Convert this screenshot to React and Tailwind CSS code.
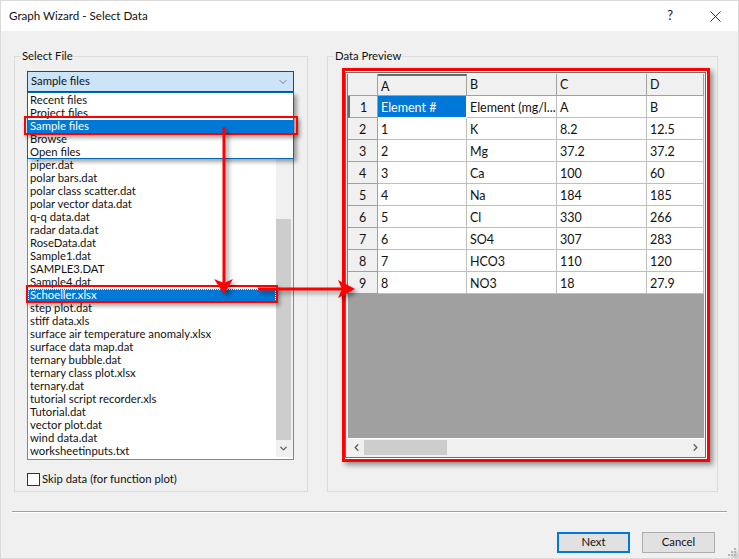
import React from 'react';
import { ChevronDown, ChevronLeft, ChevronRight, X } from 'lucide-react';

const files = [
  'piper.dat', 'polar bars.dat', 'polar class scatter.dat', 'polar vector data.dat', 'q-q data.dat',
  'radar data.dat', 'RoseData.dat', 'Sample1.dat', 'SAMPLE3.DAT', 'Sample4.dat', 'Schoeller.xlsx',
  'step plot.dat', 'stiff data.xls', 'surface air temperature anomaly.xlsx', 'surface data map.dat',
  'ternary bubble.dat', 'ternary class plot.xlsx', 'ternary.dat', 'tutorial script recorder.xls',
  'Tutorial.dat', 'vector plot.dat', 'wind data.dat', 'worksheetinputs.txt',
];

const sources = ['Recent files', 'Project files', 'Sample files', 'Browse', 'Open files'];

const rows = [
  ['Element #', 'Element (mg/l...', 'A', 'B'],
  ['1', 'K', '8.2', '12.5'],
  ['2', 'Mg', '37.2', '37.2'],
  ['3', 'Ca', '100', '60'],
  ['4', 'Na', '184', '185'],
  ['5', 'Cl', '330', '266'],
  ['6', 'SO4', '307', '283'],
  ['7', 'HCO3', '110', '120'],
  ['8', 'NO3', '18', '27.9'],
];

const FileList = () => (
  <div className="h-[368px] border border-[#828790] bg-white flex">
    <div className="flex-1 flex flex-col justify-end pb-[1px]">
      {files.map((name) => (
        <div
          key={name}
          className={
            name === 'Schoeller.xlsx'
              ? 'h-[13px] leading-[12px] pl-[2px] bg-[#0078d7] text-white outline-1 outline-dotted outline-white -outline-offset-1'
              : 'h-[13px] leading-[12px] pl-[2px]'
          }
        >
          {name}
        </div>
      ))}
    </div>
    <div className="w-[17px] bg-[#f0f0f0] flex flex-col items-center justify-end mb-[2px]">
      <div className="w-[15px] h-[221px] bg-[#cdcdcd] mr-[2px]" />
      <div className="h-[17px] flex items-center justify-center mr-[2px]">
        <ChevronDown size={11} strokeWidth={3} className="text-[#606060]" />
      </div>
    </div>
  </div>
);

const DataGrid = () => (
  <div className="flex-1 border border-[#6e6e6e] p-px bg-[#f0f0f0] flex flex-col text-[12.5px]">
    <div className="grid grid-cols-[30px_89px_90px_90px_57px] w-[357px] border-l border-[#808080]">
      <div className="h-[22px] bg-[#f0f0f0] border-r border-b border-[#a0a0a0]" />
      {['A', 'B', 'C', 'D'].map((col) => (
        <div
          key={col}
          className={
            col === 'A'
              ? 'h-[22px] pl-[3px] leading-[21px] border-t-2 border-t-[#696969] border-r border-b border-[#a0a0a0]'
              : 'h-[22px] pl-[3px] leading-[21px] border-r border-b border-[#a0a0a0]'
          }
        >
          {col}
        </div>
      ))}
      {rows.map((row, i) => (
        <React.Fragment key={i}>
          <div
            className={
              i === 0
                ? 'h-[22px] text-center leading-[23px] border-l-2 border-l-[#696969] border-r border-b border-[#a0a0a0]'
                : 'h-[22px] text-center leading-[23px] border-r border-b border-[#a0a0a0]'
            }
          >
            {i + 1}
          </div>
          {row.map((cell, j) => (
            <div
              key={j}
              className={
                i === 0 && j === 0
                  ? 'h-[22px] bg-[#0078d7] text-white pl-[3px] leading-[23px] border-r border-b border-white'
                  : 'h-[22px] bg-white pl-[3px] leading-[23px] border-r border-b border-[#bfbfbf] whitespace-nowrap overflow-hidden'
              }
            >
              {cell}
            </div>
          ))}
        </React.Fragment>
      ))}
    </div>
    <div className="flex-1 bg-[#a0a0a0] w-[356px] ml-px" />
    <div className="h-[18px] border-t border-white flex items-center ml-px">
      <div className="w-[16px] flex justify-center">
        <ChevronLeft size={11} strokeWidth={3} className="text-[#606060]" />
      </div>
      <div className="w-[83px] h-[15px] bg-[#cdcdcd]" />
      <div className="flex-1" />
      <div className="w-[17px] flex justify-center">
        <ChevronRight size={11} strokeWidth={3} className="text-[#606060]" />
      </div>
    </div>
  </div>
);

const App = () => {
  return (
    <div
      className="relative w-[739px] h-[559px] overflow-hidden border border-[#dadada] bg-[#f0f0f0] text-[11.3px] text-[#111] flex flex-col"
      style={{ fontFamily: 'Lato, sans-serif' }}
    >
      <header className="h-[30px] bg-white flex items-center justify-between pl-2 shrink-0">
        <h1 className="text-[11.6px] font-normal">Graph Wizard - Select Data</h1>
        <div className="flex items-center">
          <span className="text-[13px] mr-[33px]">?</span>
          <X size={19} strokeWidth={1.1} className="mr-[13px]" />
        </div>
      </header>

      <div className="flex gap-[19px] pl-[13px] pt-[18px]">
        <fieldset className="w-[294px] h-[443px] border border-[#dcdcdc] pl-3 pr-[13px] pt-2">
          <legend className="-ml-[6px] px-px leading-[14px]">Select File</legend>
          <div className="relative">
            <div className="h-[21px] bg-[#cce4f7] border border-[#005499] flex items-center justify-between pl-[3px] pr-[4px]">
              <span>Sample files</span>
              <ChevronDown size={12} strokeWidth={1.3} className="text-[#444]" />
            </div>
            <div className="absolute top-[21px] left-0 right-0 z-10 h-[67px] bg-white border border-[#0069b8] pt-px shadow-[3px_3px_4px_rgba(0,0,0,0.35)]">
              {sources.map((name) => (
                <div
                  key={name}
                  className={
                    name === 'Sample files'
                      ? 'h-[13px] leading-[12px] pl-[2px] bg-[#0078d7] text-white'
                      : 'h-[13px] leading-[12px] pl-[2px]'
                  }
                >
                  {name}
                </div>
              ))}
            </div>
            <FileList />
          </div>
          <label className="flex items-center gap-[2px] mt-[11px]">
            <span className="w-[13px] h-[13px] border border-[#333] bg-white" />
            <span>Skip data (for function plot)</span>
          </label>
        </fieldset>

        <fieldset className="w-[390px] h-[443px] border border-[#dcdcdc] pl-[14px] pr-[7px] pt-[5px]">
          <legend className="-ml-[8px] px-px leading-[14px]">Data Preview</legend>
          <div className="h-[394px] border-[3px] border-[#f00] bg-white pr-px py-px flex shadow-[3px_3px_5px_rgba(0,0,0,0.4)]">
            <DataGrid />
          </div>
        </fieldset>
      </div>

      <div className="mt-[19px] ml-[11px] w-[715px] border-t border-[#a0a0a0] border-b border-b-white h-[2px]" />

      <div className="flex justify-end gap-3 mt-[19px] pr-[23px]">
        <button className="w-[73px] h-[21px] bg-[#e1e1e1] border-2 border-[#0078d7] text-[11.3px]">Next</button>
        <button className="w-[73px] h-[21px] bg-[#e1e1e1] border border-[#adadad] text-[11.3px]">Cancel</button>
      </div>

      {/* annotations drawn over the dialog */}
      <div className="absolute left-[23px] top-[115px] w-[274px] h-[19px] z-20 border-2 border-[#f00] shadow-[2px_3px_4px_rgba(0,0,0,0.35)]" />
      <div className="absolute left-[25px] top-[284px] w-[252px] h-[18px] z-20 border-2 border-[#f00] shadow-[2px_3px_4px_rgba(0,0,0,0.35)]" />
      <svg
        className="absolute left-[-1px] top-[-1px] z-30 pointer-events-none drop-shadow-[3px_3px_2px_rgba(0,0,0,0.4)]"
        width="739"
        height="559"
      >
        <path d="M224 127V284" stroke="#f00" strokeWidth="3" fill="none" />
        <path d="M224 294L214 279L224 283L233 279Z" fill="#f00" />
        <path d="M258 289H344" stroke="#f00" strokeWidth="3" fill="none" />
        <path d="M355 289L338 280L342 289L338 298Z" fill="#f00" />
        <g fill="#b4b4b4">
          <rect x="734" y="548" width="2" height="2" />
          <rect x="731" y="551" width="2" height="2" />
          <rect x="734" y="551" width="2" height="2" />
          <rect x="728" y="554" width="2" height="2" />
          <rect x="731" y="554" width="2" height="2" />
          <rect x="734" y="554" width="2" height="2" />
        </g>
      </svg>
    </div>
  );
};

export default App;
